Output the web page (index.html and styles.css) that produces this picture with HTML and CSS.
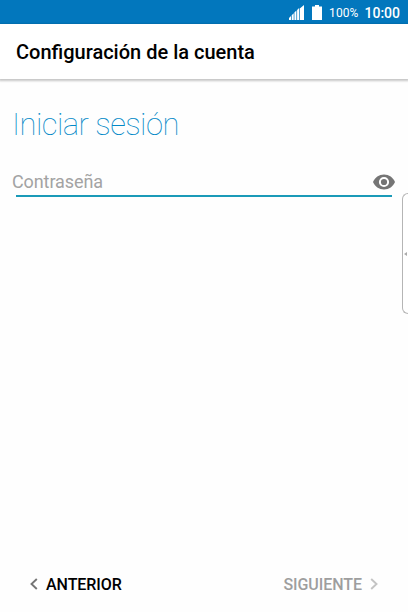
FILE: index.html
```
<!DOCTYPE html>
<html lang="es">
<head>
    <meta charset="UTF-8">
    <meta name="viewport" content="width=device-width, initial-scale=1.0">
    <title>Configuración de la cuenta</title>
    <link rel="stylesheet" href="styles.css">
</head>
<body>
    <div class="status-bar">
        <svg class="signal" width="15" height="15" viewBox="0 0 15 15">
            <path d="M0 15v-2l2-2v4zM2.700 15v-4.700l2-2V15zM5.400 15V7.600l2-2V15zM8.100 15V5l2-2v12zM10.800 15V3.500L15 0v15z" fill="#fff"/>
        </svg>
        <svg class="battery" width="10" height="15" viewBox="0 0 10 15">
            <path d="M3 0h4v1.500h3V15H0V1.500h3z" fill="#fff"/>
        </svg>
        <span class="percent">100%</span>
        <span class="clock">10:00</span>
    </div>
    <header class="header">
        <h1>Configuración de la cuenta</h1>
    </header>
    <main class="content">
        <h2>Iniciar sesión</h2>
        <div class="input-container">
            <input type="password" id="password" placeholder="Contraseña" aria-label="Contraseña">
            <svg class="eye" width="22" height="16" viewBox="0 0 22 16">
                <path d="M11 0.500C6 0.500 1.800 3.500 0 8c1.800 4.500 6 7.500 11 7.500s9.200-3 11-7.500C20.200 3.500 16 0.500 11 0.500z" fill="#757575"/>
                <circle cx="11" cy="8" r="4.100" fill="#757575" stroke="#fff" stroke-width="2"/>
            </svg>
        </div>
    </main>
    <footer class="footer">
        <button class="botao anterior">
            <svg width="8" height="12" viewBox="0 0 8 12"><path d="M6.800 1L1.500 6l5.300 5" fill="none" stroke="#757575" stroke-width="1.900"/></svg>
            <span>ANTERIOR</span>
        </button>
        <button class="botao siguiente" disabled>
            <span>SIGUIENTE</span>
            <svg width="8" height="12" viewBox="0 0 8 12"><path d="M1.200 1l5.300 5-5.300 5" fill="none" stroke="#c4c4c4" stroke-width="1.900"/></svg>
        </button>
    </footer>
    <div class="edge-handle"></div>
</body>
</html>
```

FILE: styles.css
```
* {
    box-sizing: border-box;
}

body {
    font-family: Roboto, sans-serif;
    background-color: #fefefe;
    margin: 0;
    height: 100vh;
    display: flex;
    flex-direction: column;
    position: relative;
    overflow: hidden;
}

.status-bar {
    height: 24px;
    flex-shrink: 0;
    display: flex;
    align-items: center;
    justify-content: flex-end;
    padding: 1px 8px 0 0;
    background-color: #0277bd;
    color: white;
}

.battery {
    margin-left: 8px;
}

.percent {
    font-size: 12px;
    letter-spacing: 0.1px;
    margin-left: 7px;
}

.clock {
    font-size: 14px;
    font-weight: 500;
    margin-left: 6px;
}

.header {
    height: 55px;
    flex-shrink: 0;
    display: flex;
    align-items: center;
    padding: 1px 16px 0;
    background-color: white;
    box-shadow: 0 1px 2px 1px rgba(0, 0, 0, 0.22);
}

h1 {
    margin: 0;
    font-size: 20px;
    font-weight: 500;
    color: black;
}

.content {
    flex: 1;
    padding: 27px 12px 0;
}

h2 {
    margin: 0;
    font-size: 31px;
    line-height: 38px;
    font-weight: 100;
    letter-spacing: -0.55px;
    color: #0288c7;
}

.input-container {
    display: flex;
    align-items: center;
    justify-content: space-between;
    height: 53px;
    padding-top: 22px;
    background: linear-gradient(#1a9ab8, #1a9ab8) no-repeat 4px 100% / 376px 2px;
}

input {
    flex: 1;
    min-width: 0;
    padding: 0;
    border: none;
    outline: none;
    background: none;
    font-family: inherit;
    font-size: 18px;
}

input::placeholder {
    color: #a3a3a3;
    letter-spacing: -0.1px;
}

.eye {
    margin-right: 1px;
}

.footer {
    height: 56px;
    flex-shrink: 0;
    display: flex;
    align-items: center;
    justify-content: space-between;
    padding: 0 30px 0 30px;
}

.botao {
    display: flex;
    align-items: center;
    gap: 8px;
    padding: 0;
    border: none;
    background: none;
    font-family: inherit;
    font-size: 16px;
    font-weight: 500;
    letter-spacing: -0.05px;
    color: black;
}

.siguiente {
    color: #9e9e9e;
}

/* panel handle sits over the right edge */
.edge-handle {
    position: absolute;
    top: 193px;
    right: 0;
    width: 6px;
    height: 121px;
    border: 1px solid #b5b5b5;
    border-right: none;
    border-radius: 6px 0 0 6px;
    background-color: white;
}

.edge-handle::before {
    content: "";
    position: absolute;
    top: 58px;
    right: 1px;
    border: 2px solid transparent;
    border-right: 3px solid #aaa;
    border-left: none;
}
```
